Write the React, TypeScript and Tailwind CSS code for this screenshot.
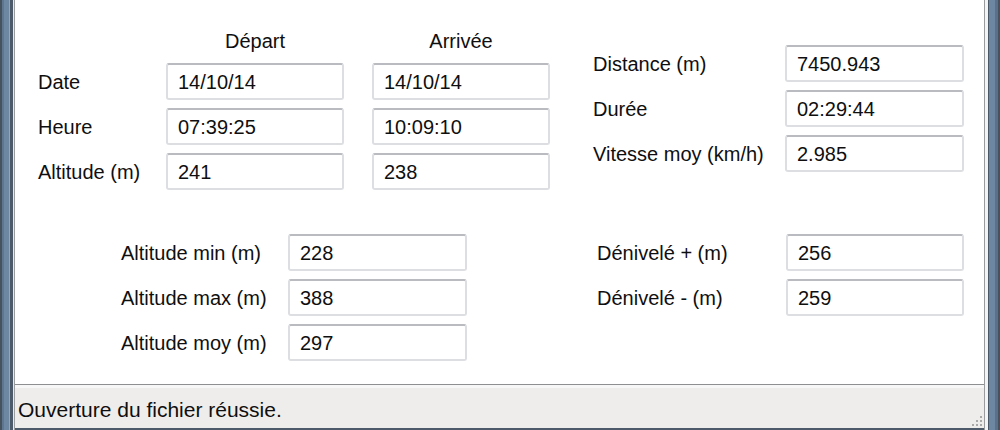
const font = { fontFamily: '"Liberation Sans", Arial, sans-serif' };

function Box({ value, w }: { value: string; w: string }) {
  return (
    <div
      className={`${w} h-[37px] flex items-center pl-[10px] text-[20px] text-[#0f0f0f] bg-white rounded-[3px] border-2 border-[#dcdee2] border-t-[#b9bbc0]`}
    >
      {value}
    </div>
  );
}

function Row({ label, value, lw, bw }: { label: string; value: string; lw: string; bw: string }) {
  return (
    <div className="flex items-center h-[37px]">
      <div className={`${lw} text-[20px] text-[#0f0f0f]`}>{label}</div>
      <Box value={value} w={bw} />
    </div>
  );
}

export default function App() {
  const times = [
    { label: "Date", dep: "14/10/14", arr: "14/10/14" },
    { label: "Heure", dep: "07:39:25", arr: "10:09:10" },
    { label: "Altitude (m)", dep: "241", arr: "238" },
  ];

  return (
    <div className="w-[1000px] h-[430px] flex overflow-hidden bg-white leading-[24px]" style={font}>
      {/* left window frame */}
      <div className="w-[13px] shrink-0 bg-[linear-gradient(to_right,#46535f_0_2px,#5f7690_2px_4px,#6d86a1_4px_9px,#93a6ba_9px_10px,#4c5a69_10px_13px)]" />
      <div className="w-px shrink-0 bg-[#e4ebf2]" />

      <div className="w-[971px] shrink-0 flex flex-col border-l border-r border-[#9a9b9c]">
        {/* main panel */}
        <div className="h-[385px] border-b border-[#8e8f90] pt-[29px]">
          <div className="flex items-start">
            {/* Départ / Arrivée */}
            <div className="ml-[23px] flex flex-col">
              <div className="flex h-[24px] text-[20px] text-[#0f0f0f]">
                <div className="w-[128px]" />
                <div className="w-[178px] text-center">Départ</div>
                <div className="w-[28px]" />
                <div className="w-[178px] text-center">Arrivée</div>
              </div>
              <div className="mt-[10px] flex flex-col gap-[8px]">
                {times.map((t) => (
                  <div key={t.label} className="flex items-center h-[37px]">
                    <div className="w-[128px] text-[20px] text-[#0f0f0f]">{t.label}</div>
                    <Box value={t.dep} w="w-[178px]" />
                    <div className="w-[28px]" />
                    <Box value={t.arr} w="w-[178px]" />
                  </div>
                ))}
              </div>
            </div>

            {/* distance / duration / speed */}
            <div className="ml-[43px] mt-[16px] flex flex-col gap-[8px]">
              <Row label="Distance (m)" value="7450.943" lw="w-[192px]" bw="w-[179px]" />
              <Row label="Durée" value="02:29:44" lw="w-[192px]" bw="w-[179px]" />
              <Row label="Vitesse moy (km/h)" value="2.985" lw="w-[192px]" bw="w-[179px]" />
            </div>
          </div>

          <div className="mt-[44px] flex items-start">
            <div className="ml-[106px] flex flex-col gap-[8px]">
              <Row label="Altitude min (m)" value="228" lw="w-[167px]" bw="w-[179px]" />
              <Row label="Altitude max (m)" value="388" lw="w-[167px]" bw="w-[179px]" />
              <Row label="Altitude moy (m)" value="297" lw="w-[167px]" bw="w-[179px]" />
            </div>
            <div className="ml-[130px] flex flex-col gap-[8px]">
              <Row label="Dénivelé + (m)" value="256" lw="w-[189px]" bw="w-[178px]" />
              <Row label="Dénivelé - (m)" value="259" lw="w-[189px]" bw="w-[178px]" />
            </div>
          </div>
        </div>

        <div className="h-[3px] bg-[#f7f7f7]" />

        {/* status bar */}
        <div className="relative h-[40px] bg-[#efedeb] flex items-center pt-[4px] pl-[3px] text-[21px] text-[#0f0f0f]">
          Ouverture du fichier réussie.
          <svg className="absolute right-[1px] bottom-[1px]" width="14" height="12" viewBox="0 0 14 12">
            <g fill="#a9a9a9">
              <rect x="11" y="1" width="2" height="2" />
              <rect x="7" y="5" width="2" height="2" />
              <rect x="11" y="5" width="2" height="2" />
              <rect x="3" y="9" width="2" height="2" />
              <rect x="7" y="9" width="2" height="2" />
              <rect x="11" y="9" width="2" height="2" />
            </g>
          </svg>
        </div>
        <div className="flex-1 bg-[#4c5a69]" />
      </div>

      {/* right window frame */}
      <div className="w-[3px] shrink-0 bg-[#f2f4f6]" />
      <div className="w-px shrink-0 bg-[#4a5766]" />
      <div className="flex-1 bg-[linear-gradient(to_right,#6d86a1_0_6px,#5c7189_6px_9px,#46535f_9px)]" />
    </div>
  );
}
